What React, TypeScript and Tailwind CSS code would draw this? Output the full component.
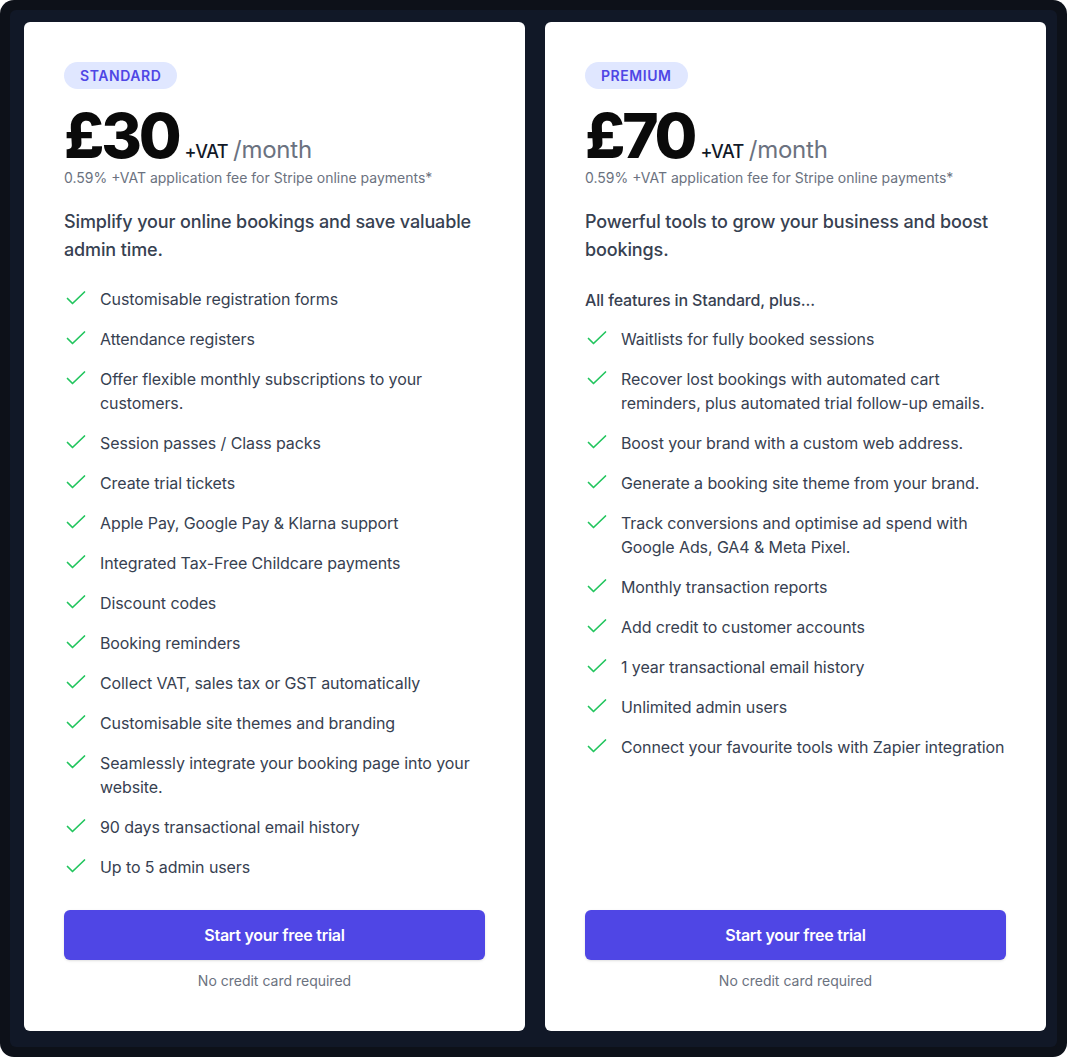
import React from "react";

const standard = [
  "Customisable registration forms",
  "Attendance registers",
  "Offer flexible monthly subscriptions to your customers.",
  "Session passes / Class packs",
  "Create trial tickets",
  "Apple Pay, Google Pay & Klarna support",
  "Integrated Tax-Free Childcare payments",
  "Discount codes",
  "Booking reminders",
  "Collect VAT, sales tax or GST automatically",
  "Customisable site themes and branding",
  "Seamlessly integrate your booking page into your website.",
  "90 days transactional email history",
  "Up to 5 admin users",
];

const premium = [
  "Waitlists for fully booked sessions",
  "Recover lost bookings with automated cart reminders, plus automated trial follow-up emails.",
  "Boost your brand with a custom web address.",
  "Generate a booking site theme from your brand.",
  "Track conversions and optimise ad spend with Google Ads, GA4 & Meta Pixel.",
  "Monthly transaction reports",
  "Add credit to customer accounts",
  "1 year transactional email history",
  "Unlimited admin users",
  "Connect your favourite tools with Zapier integration",
];

function Check() {
  return (
    <svg width="24" height="24" viewBox="0 0 24 24" fill="none" stroke="#22c55e" strokeWidth="1.7" strokeLinecap="round" strokeLinejoin="round" className="shrink-0">
      <path d="M3.5 11.5l5 5 12-11.5" />
    </svg>
  );
}

function Card({
  badge,
  price,
  desc,
  intro,
  items,
}: {
  badge: string;
  price: string;
  desc: string;
  intro?: string;
  items: string[];
}) {
  return (
    <div className="flex flex-col w-[501px] bg-white rounded-[6px] px-10 pt-10 pb-[40px]">
      <div>
        <span className="inline-flex items-center h-[27px] px-4 rounded-full bg-[#e0e7ff] text-[#4f46e5] text-sm font-semibold tracking-[0.04em]">
          {badge}
        </span>
      </div>
      <div className="flex items-baseline mt-[16px] h-[56px]">
        <span className="text-[62px] leading-none font-extrabold tracking-[-0.05em] text-[#0a0a0a]">{price}</span>
        <span className="ml-[6px] text-[18px] font-medium text-[#111827] tracking-[-0.03em]">+VAT</span>
        <span className="ml-[5px] text-[24px] text-[#6b7280] tracking-[-0.01em]">/month</span>
      </div>
      <p className="mt-[7px] text-[14px] leading-5 text-[#6b7280]">
        0.59% +VAT application fee for Stripe online payments*
      </p>
      <p className="mt-[20px] text-[18px] leading-7 font-medium text-[#374151] tracking-[-0.007em]">{desc}</p>
      {intro && (
        <p className="mt-[24px] text-[16px] leading-6 font-medium text-[#374151] tracking-[-0.008em]">{intro}</p>
      )}
      <ul className={`flex flex-col gap-4 flex-1 ${intro ? "mt-[15px]" : "mt-[23px]"}`}>
        {items.map((t) => (
          <li key={t} className="flex gap-3 text-[16px] leading-6 text-[#374151] tracking-[-0.006em]">
            <Check />
            <span>{t}</span>
          </li>
        ))}
      </ul>
      <button className="mt-[31px] h-[50px] shrink-0 w-full rounded-md bg-[#4f46e5] text-white text-[16px] font-semibold shadow-sm tracking-[-0.015em]">
        Start your free trial
      </button>
      <p className="mt-[11px] text-center text-[14px] leading-5 text-[#6b7280]">No credit card required</p>
    </div>
  );
}

export default function App() {
  return (
    <div className="w-[1067px] h-[1057px] bg-white" style={{ fontFamily: "Inter, 'Noto Sans', sans-serif" }}>
      <div className="w-full h-full rounded-[14px] bg-[#0d1119] p-[10px]">
        <div className="w-full h-full rounded-[6px] bg-[#111827] pl-[14px] pt-[12px] pb-[16px] flex gap-5">
          <Card
            badge="STANDARD"
            price="£30"
            desc="Simplify your online bookings and save valuable admin time."
            items={standard}
          />
          <Card
            badge="PREMIUM"
            price="£70"
            desc="Powerful tools to grow your business and boost bookings."
            intro="All features in Standard, plus..."
            items={premium}
          />
        </div>
      </div>
    </div>
  );
}
